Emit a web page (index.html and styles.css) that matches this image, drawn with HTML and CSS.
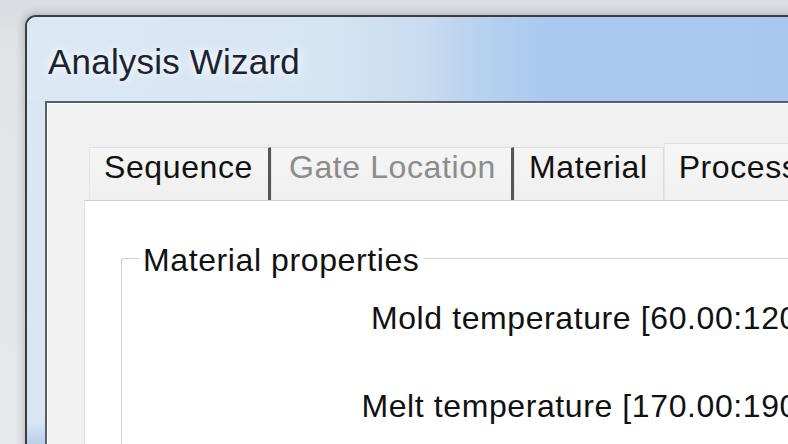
FILE: index.html
```html
<!DOCTYPE html>
<html lang="en">
<head>
<meta charset="utf-8">
<title>Analysis Wizard</title>
<link rel="stylesheet" href="styles.css">
</head>
<body>
<div class="window">
  <div class="titlebar">
    <span class="title">Analysis Wizard</span>
  </div>
  <div class="frame">
    <div class="client">
      <div class="tabstrip">
        <div class="tab tab-sep">Sequence</div>
        <div class="tab tab-sep tab-disabled">Gate Location</div>
        <div class="tab">Material</div>
        <div class="tab tab-selected">Process Settings</div>
      </div>
      <div class="panel">
        <fieldset class="group">
          <legend class="group-title">Material properties</legend>
          <div class="rows">
            <div class="row">
              <span class="label">Mold temperature [60.00:120.00] (C):</span>
            </div>
            <div class="row">
              <span class="label">Melt temperature [170.00:190.00] (C):</span>
            </div>
          </div>
        </fieldset>
      </div>
    </div>
  </div>
</div>
</body>
</html>
```

FILE: styles.css
```css
html, body {
  margin: 0;
  padding: 0;
  overflow: hidden;
  width: 788px;
  height: 444px;
}

body {
  background: linear-gradient(to bottom, #d9dde1 0, #e2e5e8 60px, #e6e8eb 100%);
  font-family: "Liberation Sans", Arial, sans-serif;
  color: #111;
}

.window {
  margin: 15px 0 0 25px;
  width: 1100px;
  height: 700px;
  border-top: 2px solid #383d45;
  border-left: 2px solid #383d45;
  border-radius: 11px 0 0 0;
  box-shadow: -2px -2px 8px rgba(0, 0, 0, 0.18);
  background: linear-gradient(to bottom, #dae6f3 0, #d9e5f2 405px, #bcd1ec 425px, #a9c3e8 440px);
  overflow: hidden;
}

.titlebar {
  height: 84px;
  box-sizing: border-box;
  padding: 25px 0 0 21px;
  background: linear-gradient(to right, #dce8f4 0, #d6e5f4 300px, #cadcf0 390px, #b9d2ee 450px, #a9c9f0 520px, #a5c6ef 100%);
}

.title {
  display: block;
  font-size: 35px;
  line-height: 40px;
  letter-spacing: 0.2px;
  color: #1a2331;
  text-shadow: 0 0 8px rgba(255, 255, 255, 0.95), 0 0 14px rgba(255, 255, 255, 0.7);
}

.frame {
  padding: 0 0 0 18px;
}

.client {
  border-top: 2px solid #55606d;
  border-left: 2px solid #55606d;
  box-shadow: inset 1px 1px 0 #ffffff;
  background: #f0f0f0;
  height: 600px;
  padding: 40px 0 0 37px;
}

.tabstrip {
  display: flex;
  align-items: flex-end;
  padding-left: 5px;
  font-size: 32px;
  letter-spacing: 0.6px;
  white-space: nowrap;
}

.tab {
  height: 53px;
  box-sizing: border-box;
  padding: 1px 15px 0 14px;
  line-height: 36px;
  background: linear-gradient(to bottom, #f5f5f5, #efefef);
  border-top: 1px solid #dedede;
  border-left: 1px solid #e6e6e6;
  border-right: 1px solid #dcdcdc;
  color: #111;
}

.tab-sep {
  border-right: 3px solid #555555;
}

.tab-disabled {
  color: #8c8c8c;
  padding-left: 17px;
}

.tab-selected {
  height: 57px;
  padding-top: 5px;
  background: linear-gradient(to bottom, #f6f6f6, #f1f1f1);
}

.panel {
  background: #ffffff;
  border-top: 1px solid #cdcdcd;
  border-left: 1px solid #e2e2e2;
  height: 500px;
  padding: 38px 0 0 36px;
  font-size: 32px;
  letter-spacing: 0.6px;
}

.group {
  margin: 0;
  padding: 22px 0 0 0;
  border: 0;
  border-top: 1px solid #cfcfcf;
  border-left: 1px solid #cfcfcf;
  border-radius: 3px 0 0 0;
  min-inline-size: 0;
  height: 400px;
}

.group-title {
  margin-left: 17px;
  padding: 3px 5px 0 4px;
  line-height: 36px;
  color: #111;
}

.rows {
  display: flex;
  flex-direction: column;
  gap: 52px;
}

.row {
  display: flex;
}

.label {
  display: block;
  width: 797px;
  text-align: right;
  line-height: 36px;
  white-space: nowrap;
}
```
